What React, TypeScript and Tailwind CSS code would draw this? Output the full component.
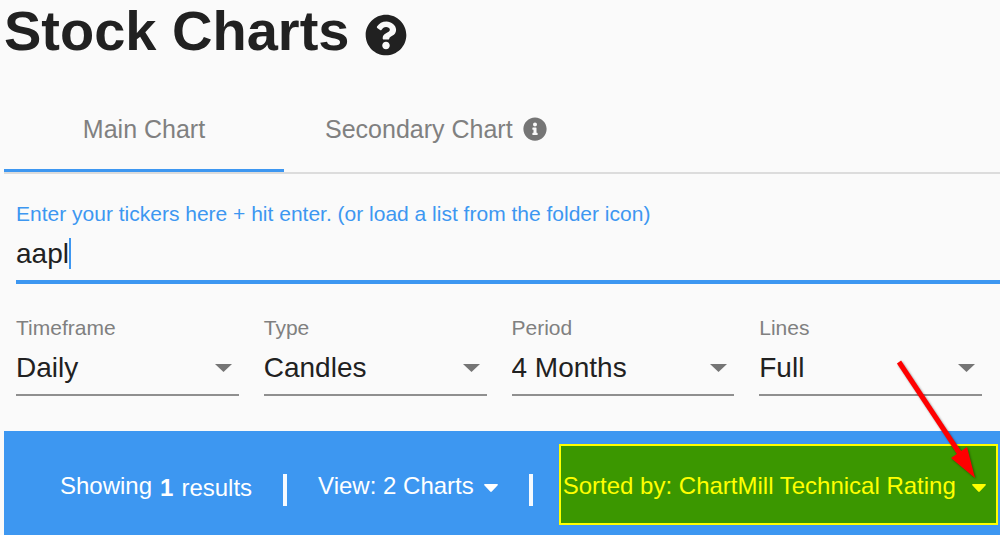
import React, { useState } from 'react';
import { FaInfoCircle, FaQuestionCircle } from 'react-icons/fa';

type SelectField = {
  id: string;
  label: string;
  options: string[];
};

const SELECT_FIELDS: SelectField[] = [
  { id: 'timeframe', label: 'Timeframe', options: ['Daily', 'Weekly', 'Monthly'] },
  { id: 'type', label: 'Type', options: ['Candles', 'Bars', 'Line'] },
  { id: 'period', label: 'Period', options: ['4 Months', '6 Months', '1 Year'] },
  { id: 'lines', label: 'Lines', options: ['Full', 'Compact', 'None'] },
];

const CaretDown: React.FC = () => (
  <svg width="14" height="8" viewBox="0 0 14 8" fill="currentColor" className="mt-1 shrink-0" aria-hidden="true">
    <path d="M1 0h12c.9 0 1.200.8.700 1.300L7.800 7.600c-.5.5-1.100.5-1.600 0L.3 1.300C-.2.8.1 0 1 0Z" />
  </svg>
);

const Separator: React.FC = () => <span className="h-8 w-1 shrink-0 bg-white/95" aria-hidden="true" />;

const SelectBox: React.FC<{ field: SelectField }> = ({ field }) => {
  const [value, setValue] = useState(field.options[0]);

  return (
    <div className="min-w-0">
      <label htmlFor={field.id} className="block text-[21px] leading-6 text-[#808080]">
        {field.label}
      </label>
      <div className="relative mt-2.5 border-b-2 border-[#8f8f8f] pb-2">
        <select
          id={field.id}
          value={value}
          onChange={(e) => setValue(e.target.value)}
          className="block w-full appearance-none bg-transparent pr-8 text-[28px] leading-9 text-[#212121] outline-none"
        >
          {field.options.map((o) => (
            <option key={o}>{o}</option>
          ))}
        </select>
        <svg
          width="17"
          height="8"
          viewBox="0 0 17 8"
          className="pointer-events-none absolute right-[7px] top-3.5 text-[#757575]"
          aria-hidden="true"
        >
          <path d="M0 0h17L8.500 8Z" fill="currentColor" />
        </svg>
      </div>
    </div>
  );
};

// Red pointer drawn over the sort menu
const Pointer: React.FC = () => (
  <svg
    width="104"
    height="125"
    viewBox="0 0 104 125"
    className="pointer-events-none absolute -top-[86px] right-0 drop-shadow-[1px_1px_1px_rgba(0,0,0,0.4)]"
    aria-hidden="true"
  >
    <path d="M5 4 66 96" stroke="#f00" strokeWidth="5" />
    <path d="M57 100 73 89 81 120Z" fill="#f00" />
  </svg>
);

export default function App() {
  const [tab, setTab] = useState<'main' | 'secondary'>('main');
  const [tickers, setTickers] = useState('aapl');

  return (
    <main className="overflow-hidden bg-[#fafafa] pl-1 font-['Liberation_Sans',Arial,sans-serif] text-[#212121]">
      <h1 className="flex items-center gap-4 text-[56px] font-bold leading-[62px]">
        Stock Charts
        <FaQuestionCircle className="mt-2 size-[42px]" />
      </h1>

      <div role="tablist" className="mt-6 flex border-b-2 border-[#dcdcdc] text-[25px] text-[#808080]">
        <button
          role="tab"
          aria-selected={tab === 'main'}
          onClick={() => setTab('main')}
          className={`h-[86px] w-[280px] border-b-[3px] pt-1 ${
            tab === 'main' ? 'border-[#3d97f1]' : 'border-transparent'
          }`}
        >
          Main Chart
        </button>
        <button
          role="tab"
          aria-selected={tab === 'secondary'}
          onClick={() => setTab('secondary')}
          className={`flex h-[86px] items-center gap-2.5 border-b-[3px] px-[41px] pt-1 ${
            tab === 'secondary' ? 'border-[#3d97f1]' : 'border-transparent'
          }`}
        >
          Secondary Chart
          <FaInfoCircle className="mb-0.5 size-6 text-[#757575]" />
        </button>
      </div>

      <div className="ml-3 mt-7 border-b-4 border-[#3d97f1] pb-[11px]">
        <label htmlFor="tickers" className="block text-[21px] leading-6 text-[#3d97f1]">
          Enter your tickers here + hit enter. (or load a list from the folder icon)
        </label>
        <div className="mt-3 flex items-center">
          <input
            id="tickers"
            value={tickers}
            onChange={(e) => setTickers(e.target.value)}
            className="h-[31px] field-sizing-content bg-transparent text-[28px] caret-transparent outline-none"
          />
          <span className="h-[31px] w-0.5 bg-[#3d97f1]" />
        </div>
      </div>

      <div className="ml-3 mr-[18px] mt-8 grid grid-cols-4 gap-[25px]">
        {SELECT_FIELDS.map((f) => (
          <SelectBox key={f.id} field={f} />
        ))}
      </div>

      <div className="mt-[35px] flex items-center whitespace-nowrap bg-[#3d97f1] pb-2.5 pl-14 pr-0.5 pt-[13px] text-2xl text-white">
        <p className="flex gap-2 pt-1">
          <span>Showing</span>
          <span className="flex gap-2 pt-0.5">
            <b>1</b>
            <span>results</span>
          </span>
        </p>
        <div className="ml-[31px] flex items-center gap-[31px] pt-2.5">
          <Separator />
          <button className="flex items-center gap-2.5 pb-2">
            View: 2 Charts
            <CaretDown />
          </button>
          <Separator />
        </div>
        <div className="relative ml-[26px] flex-1">
          <button className="flex h-[81px] w-full items-center justify-between border-2 border-[#ff0] bg-[#3b9700] pl-0.5 pr-2.5 pt-0.5 text-[#ff0]">
            Sorted by: ChartMill Technical Rating
            <CaretDown />
          </button>
          <Pointer />
        </div>
      </div>
    </main>
  );
}
